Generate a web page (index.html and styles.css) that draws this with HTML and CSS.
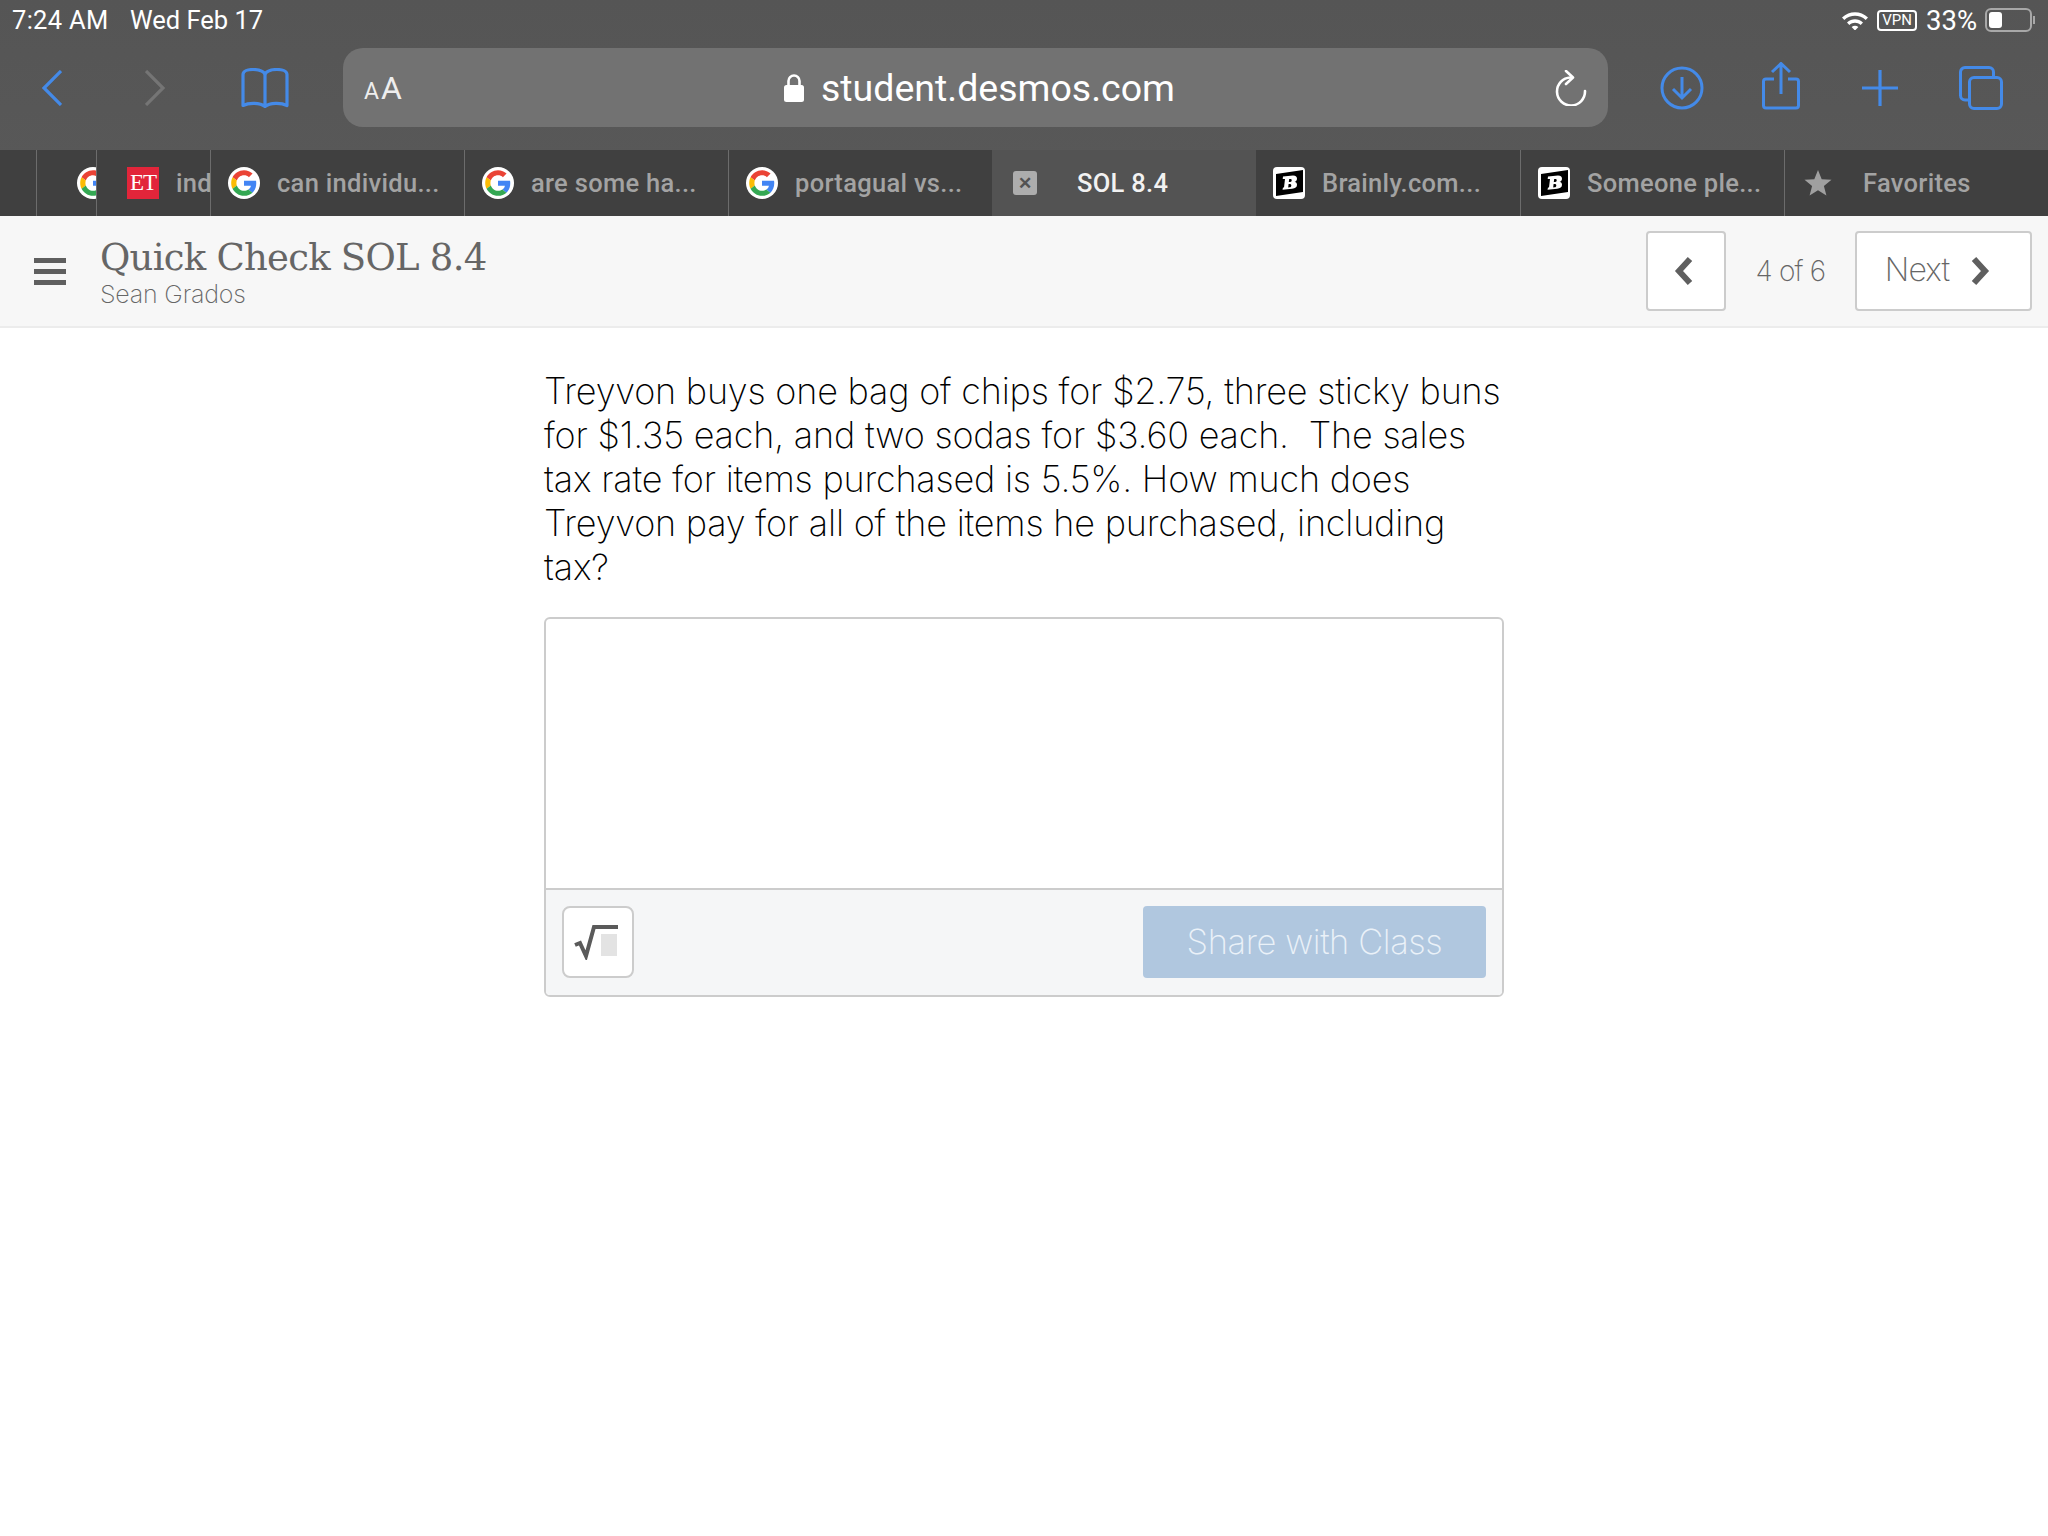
FILE: index.html
```html
<!DOCTYPE html>
<html lang="en">
<head>
<meta charset="utf-8">
<title>Quick Check SOL 8.4</title>
<link rel="stylesheet" href="styles.css">
</head>
<body>
<svg class="defs" width="0" height="0" aria-hidden="true">
  <symbol id="g" viewBox="-6 -6 60 60">
    <circle cx="24" cy="24" r="30" fill="#fff"/>
    <path fill="#EA4335" d="M24 9.5c3.54 0 6.71 1.22 9.21 3.6l6.85-6.85C35.9 2.38 30.47 0 24 0 14.62 0 6.51 5.38 2.56 13.22l7.98 6.19C12.43 13.72 17.74 9.5 24 9.5z"/>
    <path fill="#4285F4" d="M46.98 24.55c0-1.57-.15-3.09-.38-4.55H24v9.02h12.94c-.58 2.96-2.26 5.48-4.78 7.18l7.73 6c4.51-4.18 7.09-10.36 7.09-17.65z"/>
    <path fill="#FBBC05" d="M10.53 28.59c-.48-1.45-.76-2.99-.76-4.59s.27-3.14.76-4.59l-7.98-6.19C.92 16.46 0 20.12 0 24c0 3.88.92 7.54 2.56 10.78l7.97-6.19z"/>
    <path fill="#34A853" d="M24 48c6.48 0 11.93-2.13 15.89-5.81l-7.73-6c-2.15 1.45-4.92 2.3-8.16 2.3-6.26 0-11.57-4.22-13.47-9.91l-7.98 6.19C6.51 42.62 14.62 48 24 48z"/>
  </symbol>
  <symbol id="b" viewBox="0 0 32 32">
    <rect width="32" height="32" rx="4" fill="#fff"/>
    <path d="M3 7 30 3V25L3 29Z" fill="#000"/>
    <path d="M10 9.500 20 8.500c3 0 4 1.500 4 3.200 0 1.600-1 2.700-2.400 3.100 1.600.4 2.400 1.500 2.400 3 0 2.500-1.800 3.700-4.800 3.900L9.500 22.800l.5-2.400h1l1-8.500h-2.300Zm6.200 2.500-.4 3 1.400-.1c1 0 1.500-.6 1.500-1.600 0-.9-.5-1.400-1.300-1.400Zm-.6 5.100-.4 3.300 1.400-.1c1.100-.1 1.700-.7 1.700-1.800 0-1-.6-1.500-1.500-1.500Z" fill="#fff"/>
  </symbol>
</svg>

<header class="chrome">
  <div class="status">
    <span class="clock">7:24 AM</span>
    <span class="date">Wed Feb 17</span>
    <span class="status-right">
      <svg class="wifi" viewBox="0 0 28 20"><path d="M1 7.500C8.500.5 19.500.5 27 7.500l-2.300 2.400C18.500 4.300 9.500 4.300 3.300 9.900Z" fill="#fff"/><path d="M6 12.500c4.800-4.300 11.200-4.300 16 0l-2.300 2.400c-3.500-3-7.900-3-11.400 0Z" fill="#fff"/><path d="M10.600 17c2-1.800 4.800-1.800 6.800 0L14 20.500Z" fill="#fff"/></svg>
      <span class="vpn">VPN</span>
      <span class="pct">33%</span>
      <span class="battery"><span class="battery-level"></span></span>
      <span class="battery-cap"></span>
    </span>
  </div>
  <div class="toolbar">
    <div class="nav-icons">
      <svg class="ic-chev" viewBox="0 0 20 36"><path d="M19 1 2 18l17 17" fill="none" stroke="#448ae8" stroke-width="3.200"/></svg>
      <svg class="ic-chev fwd" viewBox="0 0 20 36"><path d="m1 1 17 17L1 35" fill="none" stroke="#757575" stroke-width="3.200"/></svg>
      <svg class="ic-book" viewBox="0 0 48 40"><path d="M24 7C24 4 19 1.500 12 1.500 7 1.500 2 3 2 6.500V37.500C8 34.500 19 34.500 24 38.500 29 34.500 40 34.500 46 37.500V6.500C46 3 41 1.500 36 1.500 29 1.500 24 4 24 7Zm0 0v31" fill="none" stroke="#448ae8" stroke-width="3.200" stroke-linejoin="round"/></svg>
    </div>
    <div class="urlbar">
      <span class="aa"><span class="aa-s">A</span>A</span>
      <span class="address">
        <svg class="lock" viewBox="0 0 20 28"><path d="M4.500 12V7a5.500 5.500 0 0 1 11 0v5" fill="none" stroke="#fff" stroke-width="2.600"/><rect y="11" width="20" height="17" rx="2.500" fill="#fff"/></svg>
        <span class="host">student.desmos.com</span>
      </span>
      <svg class="reload" viewBox="0 0 32 36"><path d="M15.500 7.500A14 14 0 1 0 30 21" fill="none" stroke="#fff" stroke-width="2.600" stroke-linecap="round"/><path d="M11 1 18 7.500 11 14" fill="none" stroke="#fff" stroke-width="2.600" stroke-linecap="round" stroke-linejoin="round"/></svg>
    </div>
    <div class="action-icons">
      <svg class="ic-dl" viewBox="0 0 44 44"><circle cx="22" cy="22" r="20" fill="none" stroke="#448ae8" stroke-width="3"/><path d="M22 11v21M13 23l9 9 9-9" fill="none" stroke="#448ae8" stroke-width="3"/></svg>
      <svg class="ic-share" viewBox="0 0 38 48"><path d="M12 17H4a2.500 2.500 0 0 0-2.500 2.500v24A2.500 2.500 0 0 0 4 46h30a2.500 2.500 0 0 0 2.500-2.500v-24A2.500 2.500 0 0 0 34 17h-8M19 2v30M10 10l9-8.500 9 8.500" fill="none" stroke="#448ae8" stroke-width="3"/></svg>
      <svg class="ic-plus" viewBox="0 0 36 36"><path d="M18 0v36M0 18h36" fill="none" stroke="#448ae8" stroke-width="3.200"/></svg>
      <svg class="ic-tabs" viewBox="0 0 44 44"><path d="M10 34H6a4.500 4.500 0 0 1-4.500-4.500V6A4.500 4.500 0 0 1 6 1.500h24A4.500 4.500 0 0 1 34.500 6v4" fill="none" stroke="#448ae8" stroke-width="3"/><rect x="10.500" y="11.500" width="32" height="31" rx="4.500" fill="none" stroke="#448ae8" stroke-width="3"/></svg>
    </div>
  </div>
  <div class="tabs">
    <div class="tab tab-stub"></div>
    <div class="tab tab-g0"><svg class="fav"><use href="#g"/></svg></div>
    <div class="tab tab-et"><span class="fav et">ET</span><span class="tab-label">ind</span></div>
    <div class="tab tab-wide"><svg class="fav"><use href="#g"/></svg><span class="tab-label">can individu...</span></div>
    <div class="tab tab-wide"><svg class="fav"><use href="#g"/></svg><span class="tab-label">are some ha...</span></div>
    <div class="tab tab-wide tab-last"><svg class="fav"><use href="#g"/></svg><span class="tab-label">portagual vs...</span></div>
    <div class="tab tab-wide tab-active"><span class="close">&#x2715;</span><span class="tab-label">SOL 8.4</span></div>
    <div class="tab tab-wide tab-after"><svg class="fav"><use href="#b"/></svg><span class="tab-label">Brainly.com...</span></div>
    <div class="tab tab-wide"><svg class="fav"><use href="#b"/></svg><span class="tab-label">Someone ple...</span></div>
    <div class="tab tab-fav"><svg class="star" viewBox="0 0 28 28"><path d="m14 1 3.700 9.200 9.800.6-7.600 6.200 2.500 9.500L14 21.200l-8.400 5.300 2.500-9.500L.5 10.800l9.800-.6Z" fill="#a0a0a0"/></svg><span class="tab-label">Favorites</span></div>
  </div>
</header>

<div class="activity-bar">
  <svg class="menu" viewBox="0 0 32 27"><path d="M0 0h32v5H0ZM0 11h32v5H0ZM0 22h32v5H0Z" fill="#5f5f5f"/></svg>
  <div class="titles">
    <div class="title">Quick Check SOL 8.4</div>
    <div class="student">Sean Grados</div>
  </div>
  <div class="pager">
    <button class="btn btn-prev"><svg class="pchev" viewBox="0 0 20 30"><path d="M16 3 5 15l11 12" fill="none" stroke="#5f5f5f" stroke-width="6"/></svg></button>
    <span class="count">4 of 6</span>
    <button class="btn btn-next"><span>Next</span><svg class="pchev" viewBox="0 0 20 30"><path d="m4 3 11 12L4 27" fill="none" stroke="#5f5f5f" stroke-width="6"/></svg></button>
  </div>
</div>

<main class="content">
  <p class="question">Treyvon buys one bag of chips for $2.75, three sticky buns for $1.35 each, and two sodas for $3.60 each.&nbsp; The sales tax rate for items purchased is 5.5%. How much does Treyvon pay for all of the items he purchased, including tax?</p>
  <section class="answer">
    <div class="answer-input"></div>
    <div class="answer-foot">
      <button class="math-btn"><svg viewBox="0 0 46 36"><rect x="27" y="10" width="16" height="22" fill="#e3e3e3"/><path d="M1 21l5-2 6 13L20 3h24" fill="none" stroke="#5a5a5a" stroke-width="4"/></svg></button>
      <button class="share">Share with Class</button>
    </div>
  </section>
</main>
</body>
</html>
```
FILE: styles.css
```css
* { box-sizing: border-box; }
html, body { margin: 0; background: #fff; }
body { width: 2048px; height: 1536px; overflow: hidden; font-family: "Roboto", "Liberation Sans", sans-serif; }
.defs { display: block; height: 0; }

.chrome { background: linear-gradient(#555, #595959); color: #fff; }
.status { height: 40px; display: flex; align-items: center; padding: 0 13px 0 12px; font-size: 25.500px; }
.clock { width: 118px; letter-spacing: .3px; }
.status-right { margin-left: auto; display: flex; align-items: center; }
.wifi { width: 28px; height: 20px; margin-right: 8px; }
.vpn { width: 40px; height: 21px; border: 2px solid #fff; border-radius: 4px; font-size: 15px; line-height: 17px; text-align: center; margin-right: 9px; }
.pct { font-size: 27.500px; width: 59px; }
.battery { width: 47px; height: 24px; border: 2px solid #a8a8a8; border-radius: 6px; padding: 2px; display: block; }
.battery-level { display: block; width: 13px; height: 16px; background: #fff; border-radius: 3px; }
.battery-cap { width: 2px; height: 8px; background: #a8a8a8; margin-left: 1px; }

.toolbar { height: 110px; display: flex; align-items: flex-start; padding-top: 8px; }
.nav-icons { width: 343px; height: 79px; display: flex; align-items: center; padding-left: 42px; }
.ic-chev { width: 20px; height: 36px; }
.ic-chev.fwd { margin-left: 83px; }
.ic-book { width: 48px; height: 40px; margin-left: 76px; }
.urlbar { width: 1265px; height: 79px; background: #727272; border-radius: 20px; display: flex; align-items: center; padding: 0 21px; }
.aa { font-size: 32px; color: #eee; line-height: 1; width: 420px; }
.aa-s { font-size: 23px; margin-right: 2px; }
.address { display: flex; align-items: center; }
.lock { width: 20px; height: 28px; margin-right: 17px; }
.host { font-size: 37.500px; }
.reload { width: 32px; height: 36px; margin-left: auto; }
.action-icons { height: 79px; display: flex; align-items: center; padding-left: 52px; }
.ic-dl { width: 44px; height: 44px; }
.ic-share { width: 38px; height: 48px; margin-left: 58px; margin-top: -4px; }
.ic-plus { width: 36px; height: 36px; margin-left: 62px; }
.ic-tabs { width: 44px; height: 44px; margin-left: 61px; }

.tabs { height: 66px; display: flex; background: #404040; font-size: 25.500px; font-weight: 500; letter-spacing: .3px; }
.tab { height: 66px; flex: none; display: flex; align-items: center; overflow: hidden; white-space: nowrap; border-left: 1px solid #6c6c6c; color: #a3a3a3; }
.tab-stub { width: 36px; border-left: 0; }
.tab-g0 { width: 60px; padding-left: 40px; }
.tab-et { width: 114px; padding-left: 30px; }
.tab-wide { width: 264px; padding-left: 17px; }
.tab-wide:nth-child(4) { width: 254px; }
.tab-active { background: #535353; color: #f2f2f2; border-left: 0; padding-left: 21px; }
.tab-after { border-left: 0; }
.tab-fav { width: 265px; padding-left: 19px; }
.fav { width: 32px; height: 32px; flex: none; display: block; }
.tab-label { margin-left: 17px; }
.et { background: #e2253a; color: #fff; font: 400 23px/32px "Liberation Serif", serif; text-align: center; letter-spacing: -1px; }
.close { width: 24px; height: 24px; background: #adadad; border-radius: 3px; color: #535353; font-size: 17px; line-height: 24px; text-align: center; font-weight: 700; flex: none; }
.tab-active .tab-label { margin-left: 40px; }
.star { width: 28px; height: 28px; flex: none; }
.tab-fav .tab-label { margin-left: 31px; }

.activity-bar { height: 112px; background: #f7f7f7; border-bottom: 2px solid #ececec; display: flex; align-items: center; padding: 0 16px 0 34px; }
.menu { width: 32px; height: 27px; flex: none; }
.titles { margin-left: 34px; color: #666; }
.title { font: 400 37px/44px "DejaVu Serif", serif; letter-spacing: -.75px; margin-top: 2px; }
.student { font: 250 25px/29px "Inter", sans-serif; letter-spacing: -.2px; }
.pager { margin-left: auto; display: flex; align-items: center; }
.btn { height: 80px; background: #fff; border: 2px solid #ccc; border-radius: 4px; display: flex; align-items: center; justify-content: center; color: #666; font: 250 32px "Inter", sans-serif; padding: 0; }
.btn-prev { width: 80px; padding-right: 4px; }
.pchev { width: 20px; height: 30px; }
.count { width: 129px; text-align: center; color: #666; font: 250 28px "Inter", sans-serif; letter-spacing: -.8px; }
.btn-next { width: 177px; padding-right: 12px; letter-spacing: -.8px; }
.btn-next span { margin-top: -3px; }
.btn-next .pchev { margin-left: 21px; }

.content { width: 960px; margin: 0 auto; padding-top: 41px; }
.question { margin: 0 0 28px; font: 250 36px/44px "Inter", sans-serif; letter-spacing: -.2px; color: #000; }
.answer { border: 2px solid #ccc; border-radius: 6px; height: 380px; display: flex; flex-direction: column; background: #fff; overflow: hidden; }
.answer-input { height: 271px; border-bottom: 2px solid #ccc; flex: none; }
.answer-foot { flex: 1; background: #f5f6f7; display: flex; align-items: center; justify-content: space-between; padding: 0 16px 2px; }
.math-btn { width: 72px; height: 72px; background: #fff; border: 2px solid #ccc; border-radius: 8px; padding: 0 10px; display: flex; align-items: center; }
.math-btn svg { width: 46px; height: 36px; }
.share { width: 343px; height: 72px; background: #b0c7df; border: 0; border-radius: 4px; color: #eaf1f8; font: 250 34.500px "Inter", sans-serif; letter-spacing: -.4px; padding: 0; }
```
